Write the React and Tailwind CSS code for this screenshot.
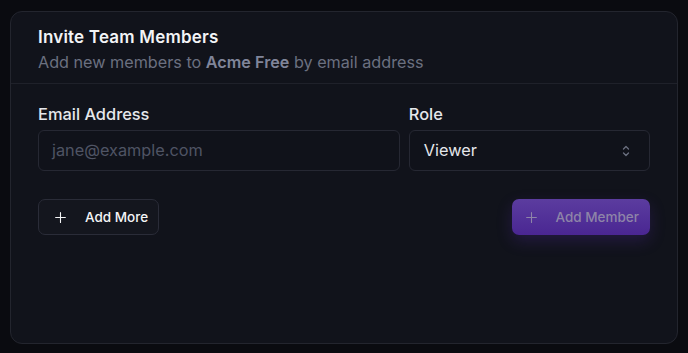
import React from "react";

function Plus({ className }) {
  return (
    <svg className={className} width="13" height="13" viewBox="0 0 24 24" fill="none" stroke="currentColor" strokeWidth="2" strokeLinecap="round">
      <path d="M12 3v18M3 12h18" />
    </svg>
  );
}

function UpDown() {
  return (
    <svg width="10" height="14" viewBox="0 0 10 14" fill="none" stroke="currentColor" strokeWidth="1.3" strokeLinecap="round" strokeLinejoin="round">
      <path d="M2.5 5L5 2.5L7.5 5" />
      <path d="M2.5 9L5 11.5L7.5 9" />
    </svg>
  );
}

export default function App() {
  return (
    <div className="h-[353px] w-[688px] bg-[#0a0b10] pt-[11px] pl-[10px] pr-[10px] pb-[9px] font-['Inter',sans-serif]">
      <div className="h-full rounded-[12px] border border-[#23252e] bg-[#11131b]">
        <div className="border-b border-[#1f212a] px-[27px] pt-[13px] pb-[9px]">
          <h2 className="text-[17px] leading-6 font-semibold text-[#f3f4f6] tracking-[0.2px]">Invite Team Members</h2>
          <p className="mt-px text-[16.2px] leading-6 text-[#6b7080]">
            Add new members to <span className="font-semibold text-[#80859a]">Acme Free</span> by email address
          </p>
        </div>
        <div className="px-[27px] pt-[18px]">
          <div className="grid grid-cols-[3fr_2fr] gap-[9px]">
            <div className="flex flex-col gap-1">
              <label className="text-[16.4px] leading-6 font-medium text-[#e5e7eb]">Email Address</label>
              <div className="flex h-[41px] items-center rounded-[6px] border border-[#262833] bg-[#10121a] px-[13px] text-[16.3px] text-[#4f5464]">
                jane@example.com
              </div>
            </div>
            <div className="flex flex-col gap-1">
              <label className="text-[16.4px] leading-6 font-medium text-[#e5e7eb]">Role</label>
              <div className="flex h-[41px] items-center justify-between rounded-[6px] border border-[#262833] bg-[#10121a] pl-[14px] pr-[18px] text-[16.3px] text-[#e5e7eb]">
                <span>Viewer</span>
                <span className="text-[#6b7080]"><UpDown /></span>
              </div>
            </div>
          </div>
          <div className="mt-[28px] flex items-center justify-between">
            <button className="flex h-[36px] items-center gap-[18px] rounded-[7px] border border-[#2a2c38] bg-[#14161e] pl-[15px] pr-[10px] text-[13.5px] font-medium text-[#f3f4f6]">
              <Plus />
              <span>Add More</span>
            </button>
            <button className="flex h-[36px] items-center gap-[18px] rounded-[7px] bg-gradient-to-b from-[#5b3c9f] to-[#4a2692] pl-[13px] pr-[11px] text-[13.5px] font-medium text-[#8e84a8] shadow-[0_6px_16px_rgba(98,48,200,0.22)]">
              <Plus />
              <span>Add Member</span>
            </button>
          </div>
        </div>
      </div>
    </div>
  );
}
